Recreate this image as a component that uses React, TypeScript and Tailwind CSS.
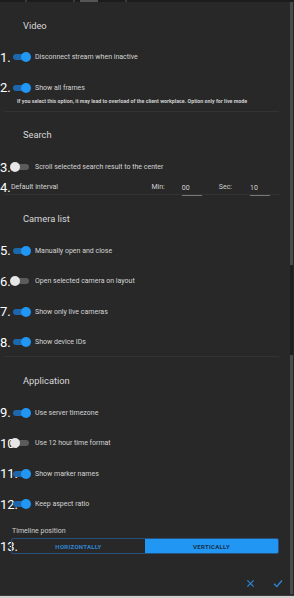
import React from "react";

type Row = { n: string; label: string; on: boolean };

const Toggle = ({ on }: { on: boolean }) => (
  <span className="relative inline-block w-[18px] h-[10px] shrink-0">
    <span
      className={`absolute left-[1px] right-[1px] top-[2px] h-[6px] rounded-full ${
        on ? "bg-[#1d67ad]" : "bg-[#5b5b5b]"
      }`}
    />
    <span
      className={`absolute top-0 w-[10px] h-[10px] rounded-full ${
        on ? "right-[-1px] bg-[#2196f3]" : "left-[-2px] bg-[#e6e6e6]"
      }`}
    />
  </span>
);

const SwitchRow = ({ n, label, on }: Row) => (
  <div className="flex items-center h-[30.5px]">
    <span className="w-[12px] text-[13px] leading-none text-white whitespace-nowrap">{n}</span>
    <Toggle on={on} />
    <span className="ml-[5px] text-[7px] text-[#d4d4d4]">{label}</span>
  </div>
);

const Heading = ({ children }: { children: React.ReactNode }) => (
  <div className="pl-[23px] text-[9.3px] text-[#d8d8d8] h-[30px] flex items-center">{children}</div>
);

const Divider = () => <div className="mx-[4px] mr-[15px] h-px bg-[#333333]" />;

export default function App() {
  return (
    <div
      className="relative w-[294px] h-[598px] bg-[#282828] overflow-hidden"
      style={{ fontFamily: "Roboto, 'Liberation Sans', Arial, sans-serif" }}
    >
      {/* top tab strip */}
      <div className="flex h-[2px] bg-[#1c1c1c]">
        <div className="ml-[25px] w-[2px] bg-[#3a3a3a]" />
        <div className="ml-[46px] w-[2px] bg-[#3a3a3a]" />
        <div className="ml-[5px] w-[18px] bg-[#555555]" />
        <div className="ml-[27px] w-[2px] bg-[#3a3a3a]" />
      </div>

      {/* scrollbar */}
      <div className="absolute right-[1px] top-[2px] bottom-[4px] w-[3px] bg-[#4a4a4a]">
        <div className="absolute left-0 right-0 top-[263px] h-[90px] bg-[#1e1e1e]" />
      </div>

      <div className="pt-[9px]">
        <Heading>Video</Heading>
        <div className="h-[1px]" />
        <SwitchRow n="1." label="Disconnect stream when inactive" on />
        <SwitchRow n="2." label="Show all frames" on />
        <div className="pl-[17px] -mt-[5px] text-[5.3px] font-bold text-[#cfcfcf] h-[13px]">
          If you select this option, it may lead to overload of the client workplace. Option only for live mode
        </div>
        <Divider />

        <div className="h-[8px]" />
        <Heading>Search</Heading>
        <div className="h-[2px]" />
        <SwitchRow n="3." label="Scroll selected search result to the center" on={false} />
        <div className="flex items-center h-[12px] -mt-[1px]">
          <span className="w-[11px] text-[13px] leading-none text-white">4.</span>
          <span className="text-[7px] text-[#d4d4d4]">Default interval</span>
          <span className="ml-auto text-[7px] text-[#cfcfcf]">Min:</span>
          <span className="ml-[17px] w-[20px] text-[7px] text-[#d4d4d4] border-b border-[#777777] pb-[1px] translate-y-[2px]">00</span>
          <span className="ml-[17px] text-[7px] text-[#cfcfcf]">Sec:</span>
          <span className="ml-[18px] mr-[24px] w-[20px] text-[7px] text-[#d4d4d4] border-b border-[#777777] pb-[1px] translate-y-[2px]">10</span>
        </div>
        <Divider />

        <div className="h-[9px]" />
        <Heading>Camera list</Heading>
        <div className="h-[2px]" />
        <SwitchRow n="5." label="Manually open and close" on />
        <SwitchRow n="6." label="Open selected camera on layout" on={false} />
        <SwitchRow n="7." label="Show only live cameras" on />
        <SwitchRow n="8." label="Show device IDs" on />
        <div className="-mt-[2px]" />
        <Divider />

        <div className="h-[9px]" />
        <Heading>Application</Heading>
        <div className="h-[2px]" />
        <SwitchRow n="9." label="Use server timezone" on />
        <SwitchRow n="10." label="Use 12 hour time format" on={false} />
        <SwitchRow n="11." label="Show marker names" on />
        <SwitchRow n="12." label="Keep aspect ratio" on />

        <div className="pl-[12px] mt-[6px] text-[7px] text-[#cfcfcf]">Timeline position</div>
        <div className="flex items-center mt-[2px]">
          <span className="w-[11px] text-[13px] leading-none text-white whitespace-nowrap">13.</span>
          <div className="flex w-[268px] h-[16px] rounded-[2px] border border-[#24527c] overflow-hidden">
            <div className="flex-1 flex items-center justify-center text-[6px] font-bold tracking-[0.3px] text-[#2f86d6]">
              HORIZONTALLY
            </div>
            <div className="flex-1 flex items-center justify-center bg-[#2196f3] text-[6px] font-bold tracking-[0.3px] text-[#16314d]">
              VERTICALLY
            </div>
          </div>
        </div>
      </div>

      {/* footer actions */}
      <div className="absolute left-0 right-0 bottom-[10px] flex justify-end items-center gap-[18px] pr-[11px]">
        <svg width="9" height="9" viewBox="0 0 10 10" fill="none" stroke="#2d85d4" strokeWidth="1.4">
          <path d="M1.5 1.5 L8.5 8.5 M8.5 1.5 L1.5 8.5" />
        </svg>
        <svg width="10" height="9" viewBox="0 0 10 9" fill="none" stroke="#2d85d4" strokeWidth="1.4">
          <path d="M1 4.8 L3.8 7.5 L9 1.5" />
        </svg>
      </div>
      <div className="absolute left-0 right-0 bottom-[2px] h-px bg-[#3a3a3a]" />
      <div className="absolute left-0 right-0 bottom-0 h-[2px] bg-[#d0d0d0]" />
    </div>
  );
}
